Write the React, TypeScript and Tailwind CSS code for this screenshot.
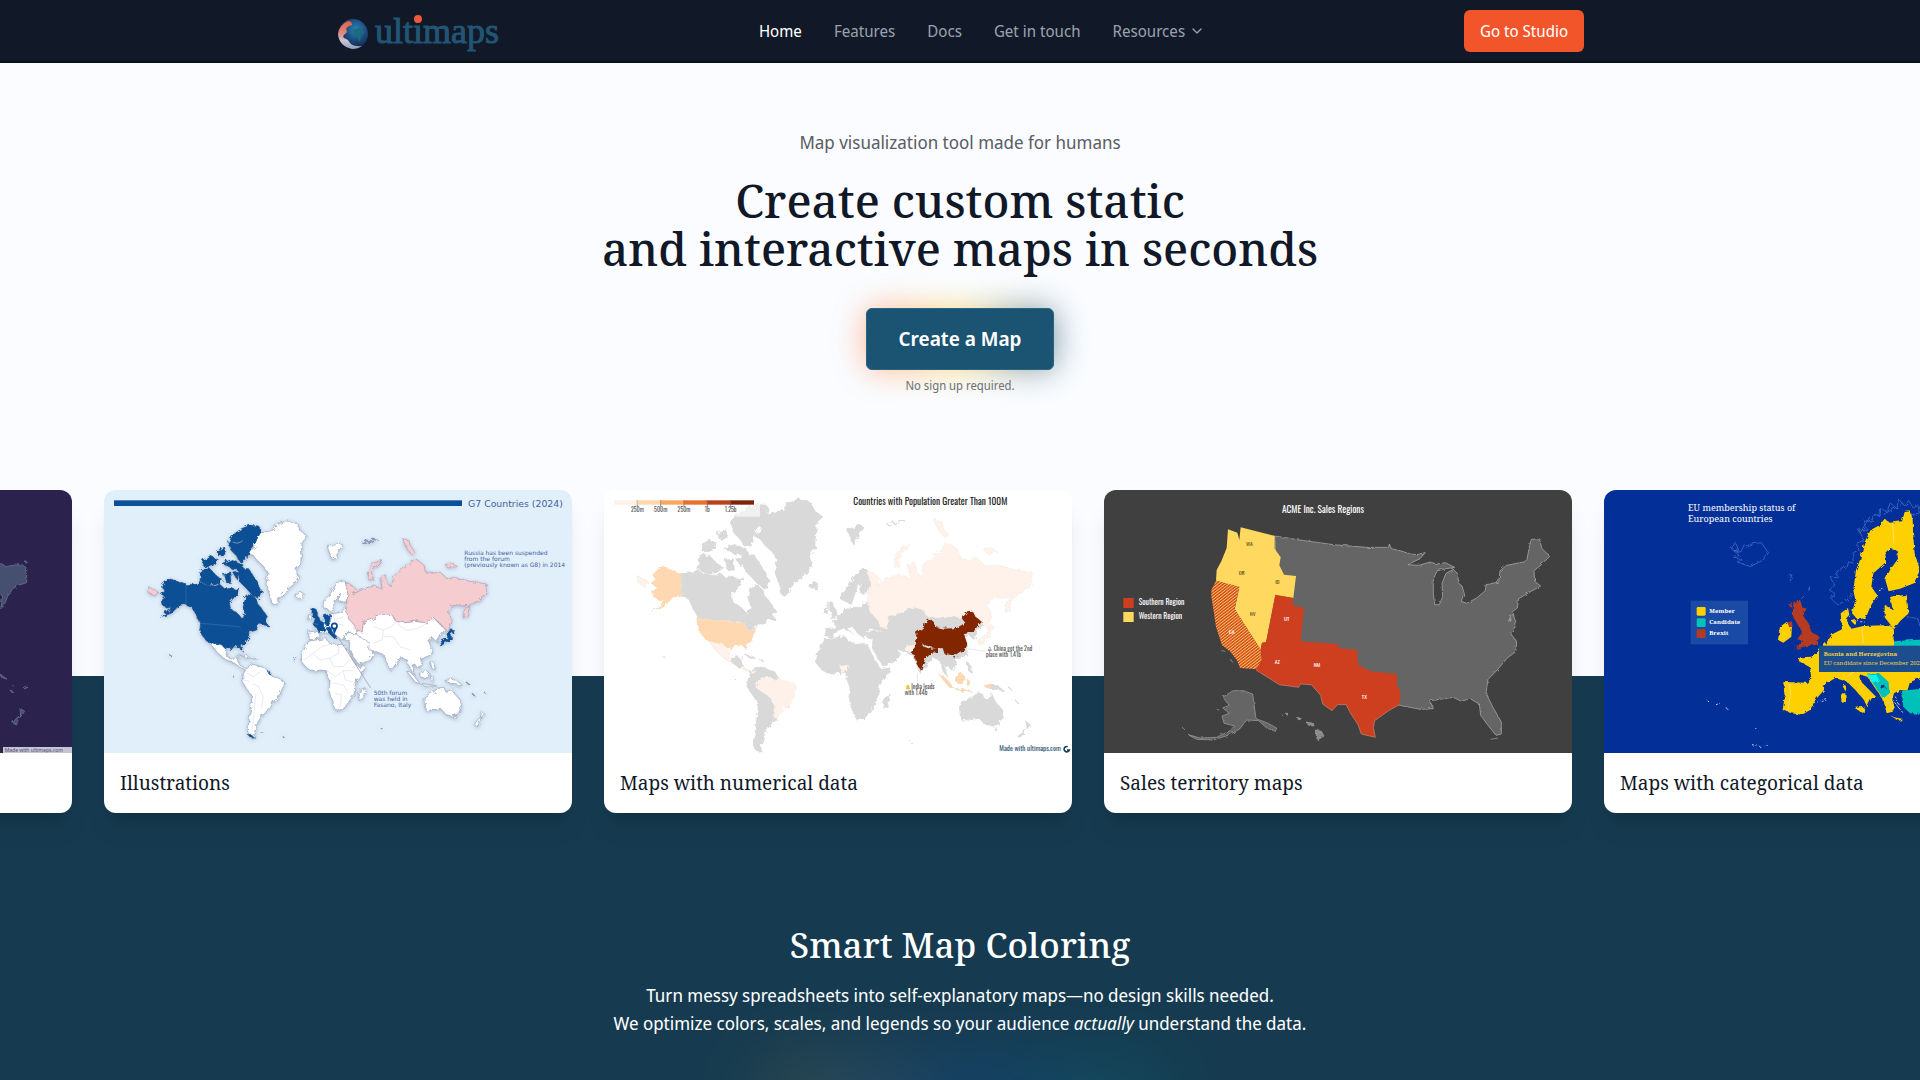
import { ChevronDown } from "lucide-react";
import type { ReactNode } from "react";

const navLinks = ["Home", "Features", "Docs", "Get in touch"];

const land = {
  alaska:
    "M258 314L236 306L212 297L197 305L184 318L192 330L181 340L196 352L184 362L186 374L200 384L214 382L204 396L178 412L214 400L238 376L258 374Z",
  canada:
    "M258 314L290 312L300 304L315 314L345 320L358 312L372 324L392 322L410 330L420 322L416 340L404 350L388 368L392 388L412 400L428 418L436 398L430 380L436 356L448 342L462 348L474 372L490 392L502 410L494 422L506 438L480 432L468 446L446 454L430 462L420 442L302 430L290 408L276 380L258 374Z",
  arctic:
    "M476 138L450 136L424 146L400 164L386 186L392 210L408 226L420 246L440 240L444 226L452 206L466 188L480 160L482 146ZM412 266L446 266L460 288L474 310L484 332L476 356L456 344L438 324L420 306ZM304 268L330 266L348 286L368 300L348 314L322 316L300 302ZM308 240L330 228L352 236L338 258L312 260ZM350 212L374 202L378 226L356 228ZM366 250L392 240L428 252L430 268L396 266ZM370 280L392 276L396 306L378 308ZM398 276L416 274L412 300Z",
  usa: "M302 430L420 442L430 462L446 454L448 470L436 488L424 498L427 514L416 500L394 502L378 508L366 496L342 492L322 486L306 466L300 444Z",
  mexico:
    "M328 486L342 492L366 496L378 508L380 530L398 540L414 524L412 542L420 556L438 566L452 564L444 572L424 564L404 550L376 538L352 518Z",
  caribbean: "M416 522L440 526L452 534L436 532ZM454 534L470 536L466 540Z",
  southAmerica:
    "M440 564L454 552L478 558L500 568L514 588L550 602L554 612L544 632L534 656L514 668L504 690L486 706L474 726L468 744L460 764L470 776L450 770L442 752L448 716L452 684L456 648L440 626L426 604L430 582Z",
  greenland:
    "M444 218L466 200L456 190L480 160L520 150L530 134L562 122L594 132L600 152L622 168L606 188L604 220L602 252L588 268L596 290L580 314L552 338L538 354L530 374L516 370L508 340L498 312L504 280L490 258L474 244L462 228Z",
  northIslands:
    "M586 342L600 334L614 344L604 356L588 352ZM682 200L704 196L716 188L730 198L716 208L708 232L698 240L690 222Z",
  scandinavia:
    "M668 382L672 360L688 346L702 322L720 302L736 304L744 340L738 366L716 366L722 340L710 352L704 372L696 394L686 390Z",
  europe:
    "M626 456L654 452L648 438L664 424L676 408L692 402L718 398L738 384L746 416L764 436L784 446L776 462L756 460L744 456L736 466L726 480L712 470L698 452L684 456L706 474L694 466L676 456L660 462L648 480L628 478Z",
  britain: "M636 384L648 388L656 410L662 426L640 432L646 416L636 408Z",
  ireland: "M626 404L636 406L634 418L624 420Z",
  africa:
    "M626 484L660 478L680 476L688 490L712 494L736 494L742 508L756 536L772 560L796 556L790 576L770 600L764 622L762 644L744 668L730 688L708 692L698 668L688 636L690 604L682 590L684 574L664 570L636 574L618 562L604 544L608 516Z",
  madagascar: "M782 628L796 624L790 654L778 662L774 646Z",
  middleEast:
    "M734 468L752 460L786 466L800 470L808 486L830 500L812 506L822 522L812 540L776 554L762 532L748 506L750 482L732 478Z",
  asia: "M766 454L786 456L790 428L820 416L848 402L880 408L888 424L916 428L946 424L980 428L1000 412L1020 434L1036 448L1018 464L1012 488L994 470L984 482L996 502L992 524L972 534L962 538L966 554L952 564L944 552L936 556L944 584L930 566L922 540L906 532L894 544L880 562L872 572L858 540L852 524L830 516L806 508L808 488L790 476L776 470Z",
  russia:
    "M736 308L756 316L770 330L758 344L784 330L804 322L828 318L846 328L842 294L856 284L862 310L876 324L880 290L896 278L920 258L946 236L972 256L976 276L998 280L1020 276L1040 296L1070 294L1110 304L1160 312L1160 344L1140 360L1110 374L1104 400L1094 418L1090 396L1104 376L1080 378L1056 376L1044 396L1056 424L1044 456L1030 440L1020 430L1000 412L980 428L946 424L916 428L888 424L880 408L848 402L820 416L790 428L786 456L766 450L764 436L746 416L738 394L740 366L744 340Z",
  russiaIslands:
    "M804 300L806 270L820 250L846 240L830 256L816 276L820 298ZM908 176L926 180L930 196L946 216L936 224L920 206ZM1036 254L1056 248L1072 260L1044 264ZM146 320L174 336L164 348L146 338Z",
  japan: "M1052 446L1064 452L1054 462L1054 476L1040 486L1022 498L1020 486L1042 474L1046 458Z",
  indonesia:
    "M920 574L930 576L948 594L956 608L944 604ZM962 582L978 570L988 580L980 598L964 594ZM950 608L980 612L1010 618L980 618ZM992 588L1000 590L998 606L992 600Z",
  newGuinea: "M1034 602L1056 598L1074 604L1090 618L1070 614L1048 610Z",
  philippines: "M990 540L1000 546L1006 570L996 566Z",
  australia:
    "M972 656L976 648L998 638L1014 624L1032 622L1036 634L1046 640L1054 620L1064 642L1082 662L1084 682L1074 702L1056 708L1038 704L1024 688L1004 690L980 696L974 680ZM1060 711L1072 710L1066 722Z",
  newZealand: "M1142 692L1156 704L1146 716ZM1144 712L1134 738L1122 734L1134 718Z",
};

const neutral: (keyof typeof land)[] = [
  "greenland",
  "northIslands",
  "mexico",
  "caribbean",
  "southAmerica",
  "scandinavia",
  "europe",
  "ireland",
  "africa",
  "madagascar",
  "middleEast",
  "asia",
  "indonesia",
  "newGuinea",
  "philippines",
  "australia",
  "newZealand",
];

function Coast({ id, scale }: { id: string; scale: number }) {
  return (
    <filter id={id} x="-5%" y="-5%" width="110%" height="110%">
      <feTurbulence
        type="fractalNoise"
        baseFrequency="0.07"
        numOctaves="3"
        seed="4"
      />
      <feDisplacementMap in="SourceGraphic" scale={scale} />
    </filter>
  );
}

function MapFrame({
  viewBox,
  label,
  className,
  children,
}: {
  viewBox: string;
  label: string;
  className: string;
  children: ReactNode;
}) {
  return (
    <svg
      viewBox={viewBox}
      role="img"
      aria-label={label}
      className={`block w-full ${className}`}
    >
      {children}
    </svg>
  );
}

function NightMap() {
  return (
    <MapFrame
      viewBox="-1188 30 1404 789"
      label="World map at night"
      className="bg-[#2b234d]"
    >
      <defs>
        <Coast id="coast-night" scale={10} />
      </defs>
      <g fill="#46506f" stroke="#6d7898" strokeWidth="2" filter="url(#coast-night)">
        <path d="M-300 260L-100 240L0 248L18 260L36 256L66 254L80 264V308L56 316L38 326L22 352L12 378L2 386L8 350L0 340L-60 400L-200 420L-300 380Z" />
        <path d="M60 684L74 694L62 710ZM62 708L48 732L38 728L52 712Z" />
        <path d="M0 582L22 598L4 592ZM34 614L40 618ZM30 630L42 636L36 638ZM70 622L82 618L76 628ZM74 242L82 246L78 250Z" />
      </g>
      <rect x="9" y="801" width="207" height="18" fill="#c6c5d4" />
      <text x="14" y="816" fontSize="16" fill="#544f76">
        Made with ultimaps.com
      </text>
    </MapFrame>
  );
}

function IllustrationMap() {
  return (
    <MapFrame
      viewBox="12 30 1404 789"
      label="G7 countries"
      className="bg-[#e1effb]"
    >
      <defs>
        <Coast id="coast-g7" scale={16} />
        <filter id="glow-g7" x="-5%" y="-5%" width="110%" height="110%">
          <feDropShadow
            dx="0"
            dy="3"
            stdDeviation="6"
            floodColor="#7b8ba5"
            floodOpacity="0.6"
          />
        </filter>
      </defs>
      <rect x="42" y="61" width="1044" height="17" fill="#0a5097" />
      <g filter="url(#glow-g7)">
        <g filter="url(#coast-g7)" strokeWidth="2" strokeLinejoin="round">
          <g fill="#fff" stroke="#98a1b8">
            {neutral.map((name) => (
              <path key={name} d={land[name]} />
            ))}
          </g>
          <g fill="#f5cdd0" stroke="#b39aae">
            <path d={land.russia} />
            <path d={land.russiaIslands} />
          </g>
          <g fill="#085095" stroke="#085095">
            <path d={land.alaska} />
            <path d={land.canada} />
            <path d={land.arctic} />
            <path d={land.usa} />
            <path d={land.britain} />
            <path d={land.japan} />
            <path d="M640 436L664 424L674 430L674 450L656 458L650 442ZM674 406L692 404L694 428L680 438L672 424ZM678 444L690 440L694 452L710 470L704 476L684 456Z" />
            <path d="M502 572L510 576L508 584ZM444 764L452 766L466 774L454 774Z" />
          </g>
          <path
            d="M784 186L794 190L800 180L808 190L820 178L836 182M210 526L216 530M398 588L402 590M846 746L850 750M484 758L490 760M548 770L552 772M1098 606L1110 616M1116 640L1126 650M1152 636L1158 640M580 540L590 532"
            fill="none"
            stroke="#8792ac"
            strokeWidth="4"
          />
        </g>
      </g>
      <g fill="none" stroke="#d9dfec" strokeWidth="2">
        <path d="M612 540L640 520L664 500L690 494M640 520L660 540L690 534L716 520V496M690 534L700 560L730 560L748 540M684 574L706 590L730 572L760 572M700 610L730 614L744 640M706 640L724 644L722 680M730 572L736 600L760 606" />
        <path d="M440 580L462 590L480 576M456 610L476 620L490 650L484 684M430 600L448 604M468 640L462 700L456 750" />
        <path d="M820 440L850 450L880 436L890 424M850 450L846 480L820 490M880 470L900 500L930 510M890 430L920 452L950 446L980 430M850 470L880 470" />
        <path d="M700 402L706 430L730 436M706 420L730 410M692 410L690 430" />
      </g>
      <path
        d="M258 316V374M304 430L420 440"
        fill="none"
        stroke="#3a70a9"
        strokeWidth="2"
      />
      <path d="M398 186Q414 194 428 182" fill="none" stroke="#6f95c0" strokeWidth="3" />
      <path d="M718 478L812 624" stroke="#8992b8" strokeWidth="2" />
      <circle cx="703" cy="438" r="8" fill="#fff" stroke="#0a4a90" strokeWidth="5" />
      <path d="M696 444L704 462L711 444Z" fill="#0a4a90" />
      <g fill="#41619f" fontFamily="'DejaVu Sans', Verdana, sans-serif">
        <text x="1104" y="80" fontSize="28">
          G7 Countries (2024)
        </text>
        <g fontSize="18">
          <text x="1093" y="226">Russia has been suspended</text>
          <text x="1093" y="244">from the forum</text>
          <text x="1093" y="262">(previously known as G8) in 2014</text>
          <text x="821" y="645">50th forum</text>
          <text x="821" y="663">was held in</text>
          <text x="821" y="681">Fasano, Italy</text>
        </g>
      </g>
    </MapFrame>
  );
}

const scaleSteps = [
  { color: "#fef1e7", label: "250m" },
  { color: "#fdd6ac", label: "500m" },
  { color: "#fba660", label: "250m" },
  { color: "#e9702f", label: "1b" },
  { color: "#b8401a", label: "1.25b" },
  { color: "#7d2408", label: "" },
];

function NumericalMap() {
  return (
    <MapFrame
      viewBox="12 30 1404 789"
      label="Countries with population greater than 100M"
      className="bg-white"
    >
      <defs>
        <Coast id="coast-num" scale={16} />
      </defs>
      <g filter="url(#coast-num)">
        <g transform="translate(-58 -87) scale(1.168)">
          <g fill="#d9d9d9">
            {neutral.map((name) => (
              <path key={name} d={land[name]} />
            ))}
            <path d={land.canada} />
            <path d={land.arctic} />
            <path d={land.britain} />
          </g>
          <g fill="#fef2ea" stroke="#eadfd8">
            <path d={land.russia} />
            <path d={land.russiaIslands} />
            <path d={land.mexico} />
            <path d={land.japan} />
          </g>
          <g fill="#fdd8b0">
            <path d={land.alaska} />
            <path d={land.usa} />
            <path d={land.indonesia} />
            <path d="M1034 602L1056 598L1054 612Z" />
          </g>
          <path
            d="M784 186L794 190L800 180L808 190L820 178L836 182M210 526L216 530M398 588L402 590M846 746L850 750M1098 606L1110 616M1116 640L1126 650"
            fill="none"
            stroke="#d9d9d9"
            strokeWidth="3"
          />
        </g>
        <path
          d="M398 530L412 526L432 556L418 566L396 548Z"
          fill="#d9d9d9"
        />
        <path
          d="M474 604L500 588L530 600L546 598L588 612L590 630L576 668L554 686L530 716L520 712L526 684L510 652L480 632L466 622Z"
          fill="#fef1ea"
        />
        <path d="M720 558L748 556L740 574L724 580Z" fill="#fef1ea" />
        <path d="M910 506L932 494L946 486L934 520Z" fill="#fef1ea" />
        <path
          d="M948 458L972 440L974 428L990 416L1002 426L1004 440L1030 446L1070 444L1096 428L1086 416L1102 394L1116 392L1124 408L1146 426L1132 438L1126 450L1106 460L1092 462L1102 492L1096 510L1072 526L1050 524L1034 522L1028 504L1012 506L994 502L972 494L954 480Z"
          fill="#822503"
        />
        <path
          d="M950 478L962 480L966 498L990 506L1016 504L1010 518L996 516L974 540L962 572L948 548L944 524L932 518L946 500Z"
          fill="#822503"
        />
        <path d="M1062 532L1068 530L1066 538Z" fill="#822503" />
      </g>
      <rect x="404" y="70" width="76" height="40" fill="#fff" fillOpacity="0.6" />
      <g>
        {scaleSteps.map((step, i) => (
          <g key={i}>
            <rect x={42 + i * 70} y="61" width="70" height="13" fill={step.color} />
            {step.label && (
              <g>
                <path d={`M${112 + i * 70} 60V80`} stroke="#555" strokeWidth="2" />
                <text
                  x={112 + i * 70}
                  y="96"
                  fontSize="18"
                  textAnchor="middle"
                  fill="#555"
                  fontFamily="Oswald, 'Roboto Condensed', sans-serif"
                >
                  {step.label}
                </text>
              </g>
            )}
          </g>
        ))}
      </g>
      <path d="M1102 506L1156 514M952 578V606" stroke="#ddd" strokeWidth="2" />
      <path d="M918 628L920 616L926 614L930 628Z" fill="#e6c431" />
      <g fontFamily="Oswald, 'Roboto Condensed', sans-serif">
        <text x="760" y="76" fontSize="28" fill="#222">
          Countries with Population Greater Than 100M
        </text>
        <g fontSize="18" fill="#555">
          <text x="1162" y="514">♙ China got the 2nd</text>
          <text x="1158" y="530">place with 1.41b</text>
          <text x="934" y="628">India leads</text>
          <text x="914" y="644">with 1.44b</text>
        </g>
        <text x="1198" y="814" fontSize="21" fill="#2e5577">
          Made with ultimaps.com
        </text>
      </g>
      <path
        d="M1403 800A8 8 0 1 0 1408 810H1401"
        fill="none"
        stroke="#1d3f5c"
        strokeWidth="5"
      />
    </MapFrame>
  );
}

const stateLabels = [
  { name: "WA", x: 448, y: 198, dark: true },
  { name: "OR", x: 425, y: 286, dark: true },
  { name: "ID", x: 532, y: 312, dark: true },
  { name: "NV", x: 458, y: 407, dark: true },
  { name: "CA", x: 395, y: 462, dark: false },
  { name: "UT", x: 560, y: 424, dark: false },
  { name: "AZ", x: 532, y: 551, dark: false },
  { name: "NM", x: 651, y: 562, dark: false },
  { name: "TX", x: 793, y: 656, dark: false },
];

function SalesMap() {
  return (
    <MapFrame
      viewBox="12 30 1404 789"
      label="ACME Inc. sales regions"
      className="bg-[#404040]"
    >
      <defs>
        <Coast id="coast-sales" scale={9} />
        <pattern
          id="stripes"
          width="7"
          height="7"
          patternUnits="userSpaceOnUse"
          patternTransform="rotate(-38)"
        >
          <rect width="7" height="7" fill="#cf3f1f" />
          <rect width="7" height="3" fill="#fbc95a" />
        </pattern>
      </defs>
      <g filter="url(#coast-sales)" strokeLinejoin="round">
        <path
          d="M524 168L600 180L700 194L800 202L866 202L868 192L874 206L900 212L932 222L950 224L976 218L960 236L924 254L956 256L990 246L1010 252L1036 248L1064 262L1040 266L1012 272L1000 296L1000 340L1004 374L1018 374L1028 350L1026 310L1038 280L1060 268L1076 284L1072 306L1086 318L1092 338L1084 364L1100 370L1130 354L1156 332L1158 314L1196 306L1200 272L1220 256L1280 244L1288 200L1294 178L1318 176L1326 206L1350 228L1322 256L1302 272L1304 304L1322 318L1290 336L1256 356L1252 384L1236 396L1226 424L1240 400L1248 436L1232 460L1250 486L1248 514L1222 534L1190 572L1164 598L1158 640L1180 684L1204 726L1204 762L1188 766L1164 736L1142 706L1138 672L1110 656L1084 664L1060 652L1020 658L990 662L1000 686L960 688L900 676L800 630L500 480L530 280Z"
          fill="#656565"
          stroke="#b5b5b5"
          strokeWidth="2"
        />
        <path
          d="M370 650L400 632L430 632L458 642L468 716L500 728L530 744L526 754L500 744L476 722L440 720L420 746L390 764L340 780L290 778L264 764L300 774L350 772L390 752L404 738L372 730L366 708L388 700L368 684L388 676L376 662Z"
          fill="#656565"
          stroke="#a5a5a5"
          strokeWidth="2"
        />
        <path
          d="M646 750L664 754L672 768L652 780ZM618 726L640 730L642 738L626 736ZM592 712L604 716L596 720ZM556 700L566 700L562 706ZM544 706L549 706M350 688L358 690M364 512L376 514M394 540L398 548M250 744L254 750M1172 778L1194 774"
          fill="#8a8a8a"
          stroke="#a5a5a5"
          strokeWidth="2"
        />
      </g>
      <path
        d="M384 148L412 158L418 180L422 142L524 168V206L542 232L538 256L552 284L588 288L580 354L526 346L498 488L486 488L482 510L404 388L418 322L348 302L350 270L364 244L380 204Z"
        fill="#ffd95f"
      />
      <path
        d="M348 302L418 320L404 388L482 508L486 538L472 568L420 564L412 542L390 514L366 496L348 440L342 400L334 350V330Z"
        fill="url(#stripes)"
      />
      <path
        d="M526 344L580 354L578 376L612 384L602 484L714 492L716 504L772 510L774 554L812 574L890 582L892 616L902 640L898 674L866 692L824 722L820 742L826 772L784 762L774 734L752 700L738 674L712 674L696 692L668 672L662 646L634 614L600 612L596 622L538 614L468 570L486 538L482 508L486 488L498 486Z"
        fill="#cd3f1f"
      />
      <path
        d="M898 674L866 692L824 722L820 742L826 772L784 762L774 734L752 700L738 674L712 674L696 692L668 672L662 646L634 614L600 612L596 622L538 614L468 570"
        fill="none"
        stroke="#c98a78"
        strokeWidth="2"
      />
      <rect x="70" y="354" width="31" height="30" fill="#cd3f1f" />
      <rect x="70" y="396" width="31" height="30" fill="#ffd95f" />
      <g
        fill="#fff"
        fontFamily="Oswald, 'Roboto Condensed', sans-serif"
      >
        <text x="546" y="98" fontSize="28">
          ACME Inc. Sales Regions
        </text>
        <text x="116" y="375" fontSize="23">
          Southern Region
        </text>
        <text x="116" y="417" fontSize="23">
          Western Region
        </text>
        {stateLabels.map((s) => (
          <text
            key={s.name}
            x={s.x}
            y={s.y}
            fontSize="17"
            textAnchor="middle"
            fill={s.dark ? "#5d4d1c" : "#ffffff"}
          >
            {s.name}
          </text>
        ))}
      </g>
    </MapFrame>
  );
}

function CategoricalMap() {
  return (
    <MapFrame
      viewBox="42 30 1404 789"
      label="EU membership status of European countries"
      className="bg-[#022f98]"
    >
      <defs>
        <Coast id="coast-eu" scale={12} />
      </defs>
      <g filter="url(#coast-eu)">
        <g fill="none" stroke="#5876cf" strokeWidth="2">
          <path d="M742 374L724 356L734 340L718 330L734 316L720 290L742 294L740 276L760 260L770 268L776 244L790 250L788 220L804 210L800 190L822 180L806 150L830 148L820 120L846 126L850 100L870 110L872 84L890 96L900 70L920 84L926 58L944 78L956 62L970 84L984 76L988 100L964 104" />
          <path d="M742 374L770 362L786 340M810 160L840 110M880 104L940 70" />
          <path d="M424 206L436 188L446 210L430 212L452 216L460 200L486 192L514 188L532 214L520 240L480 260L442 246L456 238L430 234L448 226Z" />
          <path d="M596 290L606 286L600 304M652 330L662 318L656 334M634 356L642 348M950 410L984 416L990 440" />
        </g>
        <g fill="#ffd000">
          <path d="M786 400L796 360L790 330L798 270L810 240L822 190L842 150L868 136L884 116L900 128L936 124L944 96L962 94L968 120L970 170L974 220L990 270L972 310L930 326L896 334L886 300L900 270L924 236L920 210L900 204L886 218L888 246L850 280L844 320L862 346L842 378L828 412L804 420Z" />
          <path d="M884 376L908 388L900 350L950 344L956 400L930 424L912 448L884 412Z" />
          <path d="M580 606L650 608L664 596L660 562L624 542L630 532L664 530L690 508L710 486L728 462L756 448L752 400L774 384L778 404L768 416L784 446L820 438L880 436L908 440L912 490L1000 492V590L960 606L952 632L930 630L912 640L906 660L914 694L890 700L880 660L866 640L832 590L806 582L812 604L856 648L844 656L832 682L822 660L796 630L772 606L736 594L700 616L704 628L676 660L660 690L636 704L604 700L578 690L584 650Z" />
          <path d="M794 684L824 680L820 700ZM754 640L766 640L768 666L754 668ZM758 618L766 614L766 634ZM904 710L936 716L930 722ZM570 440L590 426L606 436L604 470L580 488L564 480ZM784 424L798 420L796 436Z" />
        </g>
        <path
          d="M610 366L634 362L634 380L650 386L638 406L656 430L664 456L688 470L680 494L650 498L614 508L640 484L622 478L636 456L622 430L608 410ZM590 428L606 424L608 440L598 442ZM598 378L606 366L604 384Z"
          fill="#b53a20"
        />
        <g fill="#06c1b9">
          <path d="M912 484L1000 478V500H912ZM832 584L866 578L896 606L898 640L880 656L866 636ZM936 632L1000 626V702L960 700L940 680Z" />
        </g>
        <path d="M832 586L862 584L866 600L852 612Z" fill="#0bf5ef" />
        <path d="M872 620L882 616L888 624L876 628Z" fill="#022f98" />
        <path
          d="M890 660L912 690M916 650L930 680M900 650L940 700M682 666L712 654M800 424L824 426M866 332L880 328M350 660L356 664M378 674L390 670M408 682L414 690M496 744L500 748M486 794L504 798M510 800L514 804M526 796L532 790"
          fill="none"
          stroke="#c5cbe5"
          strokeWidth="3"
          strokeDasharray="6 5"
        />
      </g>
      <path
        d="M598 612L602 640L594 690M816 440L820 490M908 130L912 190M770 590L800 570"
        fill="none"
        stroke="#ffe06a"
        strokeWidth="3"
      />
      <rect x="302" y="362" width="172" height="131" fill="#194aa6" />
      <rect x="320" y="381" width="27" height="26" rx="4" fill="#ffd000" />
      <rect x="320" y="415" width="27" height="26" rx="4" fill="#06c1b9" />
      <rect x="320" y="448" width="27" height="26" rx="4" fill="#b53a20" />
      <rect x="687" y="497" width="420" height="79" fill="#1c4d8f" />
      <g fill="#fff" fontFamily="'Noto Serif', 'DejaVu Serif', serif">
        <text x="294" y="92" fontSize="27">
          EU membership status of
        </text>
        <text x="294" y="125" fontSize="27">
          European countries
        </text>
        <g fontSize="18" fontWeight="bold">
          <text x="358" y="399">Member</text>
          <text x="358" y="432">Candidate</text>
          <text x="358" y="466">Brexit</text>
          <text x="701" y="528" fill="#f3cf45">
            Bosnia and Herzegovina
          </text>
        </g>
        <text x="701" y="556" fontSize="18" fill="#f3cf45">
          EU candidate since December 2022
        </text>
      </g>
    </MapFrame>
  );
}

const cards = [
  { id: "night", title: "", map: <NightMap /> },
  { id: "illustrations", title: "Illustrations", map: <IllustrationMap /> },
  { id: "numerical", title: "Maps with numerical data", map: <NumericalMap /> },
  { id: "sales", title: "Sales territory maps", map: <SalesMap /> },
  { id: "categorical", title: "Maps with categorical data", map: <CategoricalMap /> },
];

function Logo() {
  return (
    <svg viewBox="0 0 164 44" role="img" aria-label="ultimaps" className="h-11 w-[164px]">
      <defs>
        <radialGradient id="globe" cx="0.6" cy="0.35" r="0.7">
          <stop offset="0" stopColor="#2a86b0" />
          <stop offset="0.5" stopColor="#1c4a80" />
          <stop offset="1" stopColor="#111a36" />
        </radialGradient>
        <linearGradient id="globe-land" x1="0" y1="0" x2="0" y2="1">
          <stop offset="0" stopColor="#e8603f" />
          <stop offset="0.45" stopColor="#e08a80" />
          <stop offset="0.7" stopColor="#c9c4d4" />
          <stop offset="1" stopColor="#8fa0bd" />
        </linearGradient>
      </defs>
      <circle cx="17" cy="25" r="15" fill="url(#globe)" />
      <path
        d="M12 12Q3 16 2 25Q3 37 16 40Q22 40 26 37Q18 38 14 34Q12 30 8 29Q6 27 9 25Q12 23 10 20Q11 17 16 16Q16 12 12 12Z"
        fill="url(#globe-land)"
      />
      <path d="M16 21L24 19L29 23L25 27L24 33L20 27Z" fill="#1a6a82" />
      <text
        x="39"
        y="34"
        fontSize="36"
        fill="#225574"
        stroke="#225574"
        fontFamily="'Liberation Serif', serif"
      >
        ultimaps
      </text>
      <circle cx="82" cy="10" r="4" fill="#f2583a" />
    </svg>
  );
}

function Header() {
  return (
    <header className="border-b-2 border-[#0a0e18] bg-[#111827]">
      <div className="mx-auto flex h-[61px] max-w-7xl items-center justify-between px-4">
        <a href="#home">
          <Logo />
        </a>
        <nav className="flex items-center gap-8 text-base text-gray-400">
          {navLinks.map((link) => (
            <a
              key={link}
              href="#"
              className={link === "Home" ? "text-white" : "hover:text-white"}
            >
              {link}
            </a>
          ))}
          <button type="button" className="flex items-center gap-1 hover:text-white">
            Resources
            <ChevronDown className="size-4" />
          </button>
        </nav>
        <a
          href="#studio"
          className="rounded-md bg-[#f3552b] px-4 py-2 text-base leading-[26px] text-white"
        >
          Go to Studio
        </a>
      </div>
    </header>
  );
}

export default function App() {
  return (
    <div className="overflow-x-clip bg-[#fafcff] font-['Noto_Sans_Display','Noto_Sans',sans-serif]">
      <Header />
      <section className="flex flex-col items-center pt-[65px] pb-[282px] text-center">
        <p className="text-lg text-[#5b5f66]">
          Map visualization tool made for humans
        </p>
        <h1 className="mt-5 font-['Noto_Serif','DejaVu_Serif',serif] text-[46px] leading-12 font-medium text-[#111827]">
          Create custom static
          <br />
          and interactive maps in seconds
        </h1>
        <div className="relative mt-9">
          <div className="absolute inset-0 rounded-xl bg-linear-to-r from-[#ff8a65] via-[#ffd54f] to-[#1b5473] opacity-70 blur-lg" />
          <button
            type="button"
            className="relative rounded-md border border-[#2a6480] bg-[#1b5372] px-8 py-4 text-xl leading-7 font-semibold text-white"
          >
            Create a Map
          </button>
        </div>
        <p className="relative mt-2 text-xs text-[#6f7378]">No sign up required.</p>
      </section>

      <section className="flow-root bg-[#163b50]">
        <ul className="-mt-[186px] -ml-99 flex gap-8">
          {cards.map((card) => (
            <li
              key={card.id}
              className="w-[468px] shrink-0 overflow-hidden rounded-xl bg-white shadow-xl"
            >
              {card.map}
              {card.title && (
                <h3 className="p-4 font-['Noto_Serif','DejaVu_Serif',serif] text-[19px] leading-7 text-gray-900">
                  {card.title}
                </h3>
              )}
            </li>
          ))}
        </ul>
        <div className="mt-28 text-center text-white">
          <h2 className="font-['Noto_Serif','DejaVu_Serif',serif] text-[35px] leading-10 font-medium">
            Smart Map Coloring
          </h2>
          <p className="mt-4 text-lg">
            Turn messy spreadsheets into self-explanatory maps—no design skills
            needed.
            <br />
            We optimize colors, scales, and legends so your audience{" "}
            <em>actually</em> understand the data.
          </p>
          <div className="mx-auto mt-10 h-10 w-96 bg-linear-to-r from-yellow-500 via-blue-600 to-teal-500 opacity-30 blur-2xl" />
        </div>
      </section>
    </div>
  );
}
